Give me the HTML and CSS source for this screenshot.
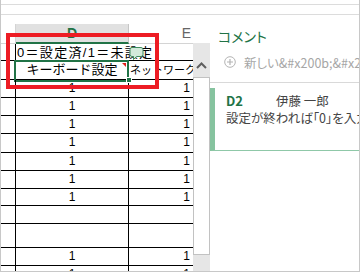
FILE: index.html
```html
<!DOCTYPE html>
<html lang="ja">

<head>
    <meta charset="UTF-8">
    <title>コメント</title>
    <link rel="stylesheet" href="styles.css">
</head>

<body>
    <div class="window">
        <div class="toolbar"></div>
        <div class="main">
            <div class="sheet">
                <div class="grid">
                    <!-- 列見出し -->
                    <div class="head"></div>
                    <div class="head head-active">D</div>
                    <div class="head">E</div>
                    <!-- 1行目 -->
                    <div class="cell"></div>
                    <div class="cell cell-overflow">
                        <span class="legend">0＝設定済/1＝未設定</span>
                        <svg class="bubble" width="15" height="15" viewBox="0 0 15 15">
                            <path d="M3 1.5h9a2 2 0 0 1 2 2v5a2 2 0 0 1-2 2H7.5L4.5 13.5v-3H3a2 2 0 0 1-2-2v-5a2 2 0 0 1 2-2z" fill="#d3eadb" stroke="#3f8a5c" stroke-width="1"/>
                        </svg>
                    </div>
                    <div class="cell"></div>
                    <!-- 2行目 -->
                    <div class="cell"></div>
                    <div class="cell cell-selected">キーボード設定<span class="note-mark"></span><span class="handle"></span></div>
                    <div class="cell cell-small">ネットワーク設定</div>
                    <!-- データ -->
                    <div class="cell"></div><div class="cell num">1</div><div class="cell num">1</div>
                    <div class="cell"></div><div class="cell num">1</div><div class="cell num">1</div>
                    <div class="cell"></div><div class="cell num">1</div><div class="cell num">1</div>
                    <div class="cell"></div><div class="cell num">1</div><div class="cell num">1</div>
                    <div class="cell"></div><div class="cell num">1</div><div class="cell num">1</div>
                    <div class="cell"></div><div class="cell num">1</div><div class="cell num">1</div>
                    <div class="cell"></div><div class="cell num">1</div><div class="cell num">1</div>
                    <div class="cell"></div><div class="cell"></div><div class="cell"></div>
                    <div class="cell"></div><div class="cell"></div><div class="cell"></div>
                    <div class="cell"></div><div class="cell num">1</div><div class="cell num">1</div>
                    <div class="cell"></div><div class="cell num">1</div><div class="cell num">1</div>
                </div>
            </div>
            <div class="scrollbar">
                <div class="scroll-up">
                    <svg width="11" height="7" viewBox="0 0 11 7">
                        <path d="M1 6L5.5 1.5L10 6" fill="none" stroke="#5f5f5f" stroke-width="2"/>
                    </svg>
                </div>
                <div class="scroll-thumb"></div>
                <div class="scroll-track"></div>
            </div>
            <div class="panel">
                <div class="panel-head">
                    <div class="panel-title">コメント</div>
                    <div class="new-comment">
                        <svg class="plus-icon" width="12" height="12" viewBox="0 0 12 12">
                            <circle cx="6" cy="6" r="5.3" fill="none" stroke="#b4b4b4" stroke-width="1"/>
                            <path d="M6 3v6M3 6h6" stroke="#b4b4b4" stroke-width="1.2"/>
                        </svg>
                        <span>新しい&amp;#x200b;&amp;#x200b;コメント</span>
                    </div>
                </div>
                <div class="card">
                    <div class="card-top">
                        <span class="card-ref">D2</span>
                        <span class="card-author">伊藤 一郎</span>
                    </div>
                    <div class="card-text">設定が終われば「0」を入力してください</div>
                </div>
            </div>
        </div>
        <div class="callout"></div>
    </div>
</body>

</html>
```

FILE: styles.css
```css
* {
    box-sizing: border-box;
}
body {
    margin: 0;
    background: #ffffff;
    font-family: "Liberation Sans", "Noto Sans CJK JP", sans-serif;
}
.window {
    position: relative;
    width: 360px;
    height: 272px;
    border-left: 1px solid #c8c8c8;
    border-right: 1px solid #c8c8c8;
    border-bottom: 1px solid #c8c8c8;
    display: flex;
    flex-direction: column;
    overflow: hidden;
}
.toolbar {
    margin-top: 4px;
    height: 11px;
    border-top: 1px solid #dcdcdc;
    border-bottom: 1px solid #dcdcdc;
}
.main {
    flex: 1;
    display: flex;
    min-height: 0;
}

/* シート */
.sheet {
    width: 192px;
    padding-top: 9px;
    overflow: hidden;
}
.grid {
    display: grid;
    grid-template-columns: 15px 113px 116px;
    grid-template-rows: 20px 17px 19px 18px 18px 18px 19px 18px 18px 17px 18px 24px 18px 18px;
}
.head {
    border-right: 1px solid #d4d4d4;
    border-bottom: 1px solid #d4d4d4;
    color: #666666;
    font-size: 14px;
    line-height: 19px;
    text-align: center;
}
.head-active {
    background-color: #e1e1e1;
    border-right-color: #c6c6c6;
    border-bottom: 2px solid #217346;
    color: #217346;
    font-weight: bold;
}
.cell {
    position: relative;
    border-right: 1px solid #000000;
    border-bottom: 1px solid #000000;
    font-size: 13px;
    line-height: 17px;
    color: #000000;
    white-space: nowrap;
}
.cell-overflow {
    border-right: none;
    padding-left: 1px;
}
.legend {
    letter-spacing: 1.3px;
}
.bubble {
    position: absolute;
    left: 113px;
    top: 2px;
}
.cell-selected {
    text-align: center;
}
.cell-selected::after {
    content: "";
    position: absolute;
    left: -2px;
    top: -1px;
    right: -1px;
    bottom: -3px;
    border: 2px solid #217346;
}
.note-mark {
    position: absolute;
    right: 2px;
    top: 2px;
    width: 0;
    height: 0;
    border-top: 4px solid #e0201b;
    border-left: 4px solid transparent;
}
.handle {
    position: absolute;
    right: -4px;
    bottom: -4px;
    width: 6px;
    height: 6px;
    background: #217346;
    border: 1px solid #ffffff;
    z-index: 1;
}
.cell-small {
    font-size: 11px;
    padding-left: 1px;
    overflow: hidden;
    line-height: 18px;
}
.num {
    text-align: center;
    font-size: 12px;
}

/* スクロールバー */
.scrollbar {
    width: 17px;
    margin-top: 28px;
    display: flex;
    flex-direction: column;
}
.scroll-up {
    height: 34px;
    background: #e6e6e6;
    display: flex;
    justify-content: center;
    align-items: flex-end;
    padding-bottom: 8px;
}
.scroll-thumb {
    flex: 1;
    background: #ffffff;
    border: 1px solid #c2c2c2;
}
.scroll-track {
    height: 16px;
    background: #e6e6e6;
}

/* コメント */
.panel {
    flex: 1;
    min-width: 0;
    overflow: hidden;
    font-family: "Noto Sans CJK JP", sans-serif;
    font-feature-settings: "palt";
}
.panel-head {
    height: 68px;
    border-bottom: 1px solid #d9d9d9;
    padding-top: 11px;
}
.panel-title {
    padding-left: 8px;
    color: #217346;
    font-size: 14px;
    line-height: 20px;
}
.new-comment {
    display: flex;
    align-items: center;
    gap: 8px;
    margin-top: 6px;
    padding-left: 14px;
    height: 20px;
    color: #a6a6a6;
    font-size: 12.5px;
    white-space: nowrap;
}
.plus-icon {
    flex-shrink: 0;
}
.card {
    margin-top: 5px;
    height: 63px;
    border-left: 5px solid #86c39f;
    border-bottom: 1px solid #8fc8a8;
    padding: 4px 0 0 11px;
    color: #444444;
    font-size: 12.5px;
    line-height: 17px;
    white-space: nowrap;
}
.card-top {
    display: flex;
}
.card-ref {
    width: 50px;
    color: #217346;
    font-weight: bold;
    font-size: 13px;
}
.callout {
    position: absolute;
    left: 5px;
    top: 33px;
    width: 153px;
    height: 56px;
    border: 4px solid #ed1c24;
}
```
